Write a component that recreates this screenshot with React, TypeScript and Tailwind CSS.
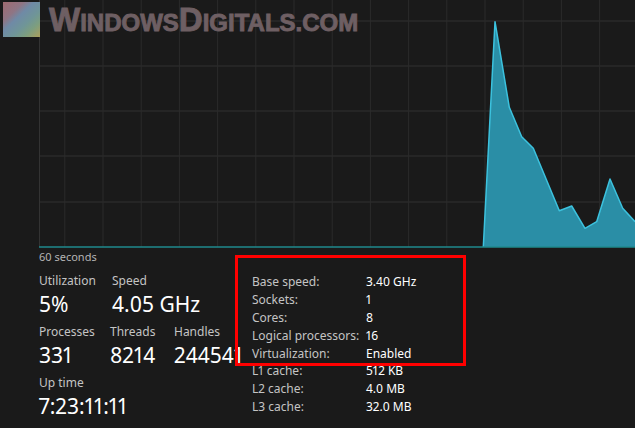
import React from "react";

const font = { fontFamily: '"Noto Sans", "Open Sans", sans-serif' };

const peak = [
  [444.3, 247],
  [456, 21.7],
  [470.3, 107.3],
  [482.7, 136.7],
  [494.3, 148.3],
  [520.3, 210.7],
  [532.7, 206],
  [546, 228.3],
  [557.7, 221.7],
  [571, 179],
  [583.7, 208.3],
  [596, 221.7],
];

const CpuGraph = () => {
  const hLines = [21, 66, 111, 156, 202];
  const vLines = Array.from({ length: 16 }, (_, i) => 25.8 + 38.2 * i);
  const line = peak.map(([x, y]) => `${x},${y}`).join(" ");
  return (
    <svg width="596" height="248" viewBox="0 0 596 248" className="block">
      {hLines.map((y) => (
        <line key={y} x1="0" x2="596" y1={y} y2={y} stroke="#303030" strokeWidth="1" />
      ))}
      {vLines.map((x) => (
        <line key={x} x1={x} x2={x} y1="0" y2="247" stroke="#2b2b2b" strokeWidth="1" />
      ))}
      <line x1="0.5" x2="0.5" y1="0" y2="247" stroke="#333333" strokeWidth="1" />
      <polygon points={`${line} 596,247`} fill="#2a8ea6" />
      <polyline points={line} fill="none" stroke="#3cc2de" strokeWidth="1.5" strokeLinejoin="round" />
      <line x1="0" x2="596" y1="247" y2="247" stroke="#1f8a8e" strokeWidth="1.5" />
    </svg>
  );
};

const Watermark = () => (
  <div className="absolute left-[3px] top-[2px] flex items-start">
    <svg width="37" height="35" viewBox="0 0 37 35">
      <defs>
        <linearGradient id="wd" x1="0" y1="0" x2="1" y2="1">
          <stop offset="0" stopColor="#a06a70" />
          <stop offset="0.28" stopColor="#8f7584" />
          <stop offset="0.42" stopColor="#6f8aa6" />
          <stop offset="0.62" stopColor="#6f9598" />
          <stop offset="0.78" stopColor="#7c9e80" />
          <stop offset="1" stopColor="#ab9f5c" />
        </linearGradient>
      </defs>
      <rect width="37" height="35" fill="url(#wd)" />
    </svg>
    <div
      className="ml-[9px] mt-[1px] font-bold text-[#6e5f63] leading-none whitespace-nowrap [-webkit-text-stroke:0.9px_#6e5f63]"
      style={{ fontFamily: '"Liberation Sans", Arial, sans-serif' }}
    >
      <span className="text-[33px]">W</span>
      <span className="text-[24px]">INDOWS</span>
      <span className="text-[33px]">D</span>
      <span className="text-[24px]">IGITALS.COM</span>
    </div>
  </div>
);

const Stat = ({ label, value, w }: { label: string; value: string; w?: string }) => (
  <div className={`flex flex-col ${w ?? ""}`}>
    <div className="text-[12px] leading-[16px] text-[#c4c4c4]">{label}</div>
    <div className="mt-[1px] text-[21px] leading-[28px] text-white proportional-nums">{value}</div>
  </div>
);

const info: [string, string][] = [
  ["Base speed:", "3.40 GHz"],
  ["Sockets:", "1"],
  ["Cores:", "8"],
  ["Logical processors:", "16"],
  ["Virtualization:", "Enabled"],
  ["L1 cache:", "512 KB"],
  ["L2 cache:", "4.0 MB"],
  ["L3 cache:", "32.0 MB"],
];

export default function App() {
  return (
    <div className="relative w-[635px] h-[428px] overflow-hidden bg-[#1a1a1a]" style={font}>
      <div className="pl-[39px]">
        <CpuGraph />
        <div className="mt-[2px] text-[11px] leading-[14px] text-[#b4b4b4]">60 seconds</div>
        <div className="mt-[9px] flex">
          <div className="w-[213px] flex flex-col gap-[6px]">
            <div className="flex">
              <Stat label="Utilization" value="5%" w="w-[73px]" />
              <Stat label="Speed" value="4.05 GHz" />
            </div>
            <div className="flex">
              <Stat label="Processes" value="331" w="w-[71px]" />
              <Stat label="Threads" value="8214" w="w-[64px]" />
              <Stat label="Handles" value="244541" />
            </div>
            <Stat label="Up time" value="7:23:11:11" />
          </div>
          <div className="grid grid-cols-[114px_auto] auto-rows-[17.9px] text-[12px] leading-[17.9px] proportional-nums">
            {info.map(([k, v]) => (
              <React.Fragment key={k}>
                <div className="text-[#c4c4c4] whitespace-nowrap">{k}</div>
                <div className="text-white whitespace-nowrap">{v}</div>
              </React.Fragment>
            ))}
          </div>
        </div>
      </div>
      <Watermark />
      <div className="absolute left-[235px] top-[255px] w-[231px] h-[111px] border-[3px] border-[#ff0000]" />
    </div>
  );
}
